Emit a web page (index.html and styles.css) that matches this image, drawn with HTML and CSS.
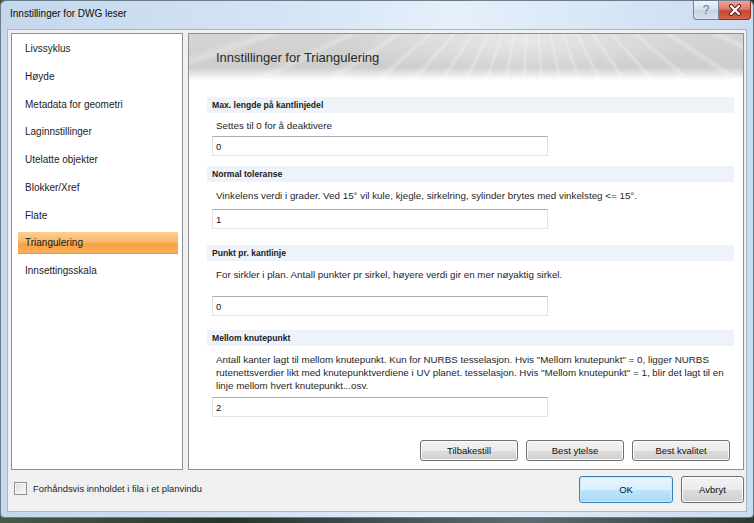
FILE: index.html
```html
<!DOCTYPE html>
<html lang="nb">
<head>
  <meta charset="UTF-8">
  <title>Innstillinger for DWG leser</title>
  <link rel="stylesheet" href="styles.css">
</head>
<body>
  <div class="window">
    <div class="titlebar">
      <span class="title">Innstillinger for DWG leser</span>
      <div class="caption-buttons">
        <span class="cap-btn help">?</span>
        <span class="cap-btn close">
          <svg width="14" height="12" viewBox="0 0 14 12">
            <path d="M3 2 L11 10 M11 2 L3 10" stroke="#5a1a12" stroke-width="4" stroke-linecap="round"/>
            <path d="M3 2 L11 10 M11 2 L3 10" stroke="#fff" stroke-width="2.2" stroke-linecap="round"/>
          </svg>
        </span>
      </div>
    </div>

    <div class="client">
      <div class="panels">
        <ul class="nav">
          <li>Livssyklus</li>
          <li>Høyde</li>
          <li>Metadata for geometri</li>
          <li>Laginnstillinger</li>
          <li>Utelatte objekter</li>
          <li>Blokker/Xref</li>
          <li>Flate</li>
          <li class="active">Triangulering</li>
          <li>Innsettingsskala</li>
        </ul>

        <div class="page">
          <div class="page-head">
            <h2>Innstillinger for Triangulering</h2>
          </div>
          <div class="page-body">
            <section class="group">
              <div class="group-head">Max. lengde på kantlinjedel</div>
              <p class="group-desc">Settes til 0 for å deaktivere</p>
              <input class="field" type="text" value="0">
            </section>

            <section class="group group-2">
              <div class="group-head">Normal toleranse</div>
              <p class="group-desc">Vinkelens verdi i grader. Ved 15° vil kule, kjegle, sirkelring, sylinder brytes med vinkelsteg &lt;= 15°.</p>
              <input class="field" type="text" value="1">
            </section>

            <section class="group group-3">
              <div class="group-head">Punkt pr. kantlinje</div>
              <p class="group-desc">For sirkler i plan. Antall punkter pr sirkel, høyere verdi gir en mer nøyaktig sirkel.</p>
              <input class="field" type="text" value="0">
            </section>

            <section class="group group-4">
              <div class="group-head">Mellom knutepunkt</div>
              <p class="group-desc">Antall kanter lagt til mellom knutepunkt. Kun for NURBS tesselasjon. Hvis "Mellom knutepunkt" = 0, ligger NURBS<br>rutenettsverdier likt med knutepunktverdiene i UV planet. tesselasjon. Hvis "Mellom knutepunkt" = 1, blir det lagt til en<br>linje mellom hvert knutepunkt...osv.</p>
              <input class="field" type="text" value="2">
            </section>

            <div class="page-actions">
              <button class="btn">Tilbakestill</button>
              <button class="btn">Best ytelse</button>
              <button class="btn">Best kvalitet</button>
            </div>
          </div>
        </div>
      </div>

      <div class="footer">
        <label class="preview"><span class="checkbox"></span>Forhåndsvis innholdet i fila i et planvindu</label>
        <div class="dialog-buttons">
          <button class="btn btn-default">OK</button>
          <button class="btn btn-cancel">Avbryt</button>
        </div>
      </div>
    </div>
  </div>
</body>
</html>
```

FILE: styles.css
```css
body {
  margin: 0;
  width: 754px;
  height: 523px;
  overflow: hidden;
  font-family: "Liberation Sans", Arial, sans-serif;
  background: linear-gradient(90deg, #4a5a48, #26342c 30%, #5d6c70 70%, #2c3a33);
}

.window {
  box-sizing: border-box;
  width: 754px;
  height: 518px;
  display: flex;
  flex-direction: column;
  border: 1px solid #6a7c90;
  border-radius: 6px 6px 4px 4px;
  padding: 0 6px 5px 6px;
  background: linear-gradient(90deg, #c4d7ec, #d9e7f6 45%, #e6f0fa 60%, #cadcf0);
}

/* title bar */
.titlebar {
  height: 28px;
  flex-shrink: 0;
  display: flex;
  justify-content: space-between;
  align-items: flex-start;
}

.title {
  font-size: 10px;
  color: #0c0c0c;
  padding: 7px 0 0 3px;
}

.caption-buttons {
  display: flex;
  margin-right: -4px;
}

.cap-btn {
  box-sizing: border-box;
  height: 19px;
  display: flex;
  align-items: center;
  justify-content: center;
}

.help {
  width: 26px;
  border: 1px solid #72839a;
  border-top: none;
  border-radius: 0 0 0 4px;
  background: linear-gradient(#eef3f9, #d3dfec 50%, #c2d2e4 51%, #d6e2ef);
  font-size: 12px;
  color: #66768a;
}

.close {
  width: 32px;
  border: 1px solid #8c2c1e;
  border-top: none;
  border-left: none;
  border-radius: 0 0 4px 0;
  background: linear-gradient(#eaa797, #dc7a68 45%, #c74430 55%, #d7644c);
}

/* client area */
.client {
  flex: 1;
  display: flex;
  flex-direction: column;
  background: #f0f0f0;
  border: 1px solid #a8b6c6;
  padding: 3px 2px 0 3px;
}

.panels {
  height: 437px;
  flex-shrink: 0;
  display: flex;
  gap: 5px;
}

.nav {
  box-sizing: border-box;
  width: 172px;
  margin: 0;
  padding: 4px 4px 0 6px;
  list-style: none;
  background: #fff;
  border: 1px solid #8d9096;
}

.nav li {
  height: 22px;
  line-height: 22px;
  margin-bottom: 5.75px;
  padding-left: 7px;
  font-size: 10px;
  color: #1b1b1b;
}

.nav li.active {
  background: linear-gradient(#fcd08c, #f9b868 45%, #f7a043 55%, #f9b25e);
  box-shadow: inset 0 -1px 0 #e7953f;
}

.page {
  flex: 1;
  display: flex;
  flex-direction: column;
  background: #fff;
  border: 1px solid #8d9096;
  overflow: hidden;
}

.page-head {
  height: 46px;
  flex-shrink: 0;
  padding: 16px 0 0 27px;
  box-sizing: border-box;
  background:
    linear-gradient(to bottom, rgba(255,255,255,0) 72%, #fff 100%),
    radial-gradient(ellipse 180px 36px at 60% 15%, rgba(255,255,255,0.45), rgba(255,255,255,0)),
    repeating-conic-gradient(from 145deg at 62% -90px, rgba(255,255,255,0) 0deg, rgba(255,255,255,0.28) 1deg, rgba(255,255,255,0) 2.4deg, rgba(255,255,255,0) 7.5deg),
    linear-gradient(to bottom, #d5d5d3, #cacac8);
}

.page-head h2 {
  margin: 0;
  font-size: 13px;
  font-weight: normal;
  line-height: 16px;
  color: #2a2a2a;
}

.page-body {
  flex: 1;
  display: flex;
  flex-direction: column;
  padding: 17px 9px 0 18px;
}

.group {
  flex-shrink: 0;
  margin-bottom: 10px;
}

.group-head {
  height: 16px;
  line-height: 16px;
  padding-left: 5px;
  background: #eef2f9;
  font-size: 8.6px;
  font-weight: bold;
  color: #1a1a1a;
}

.group-desc {
  margin: 7px 0 0 9px;
  font-size: 9.8px;
  line-height: 12px;
  color: #1f1f1f;
  white-space: nowrap;
}

.field {
  box-sizing: border-box;
  display: block;
  width: 336px;
  height: 20px;
  margin: 4px 0 0 5px;
  padding: 0 3px;
  border: 1px solid #e2e3ea;
  border-top-color: #abadb3;
  font-family: inherit;
  font-size: 9.5px;
  color: #111;
  background: #fff;
}

.group-2 .group-desc,
.group-3 .group-desc {
  margin-top: 8px;
}

.group-2 .field {
  margin-top: 7px;
}

.group-2 {
  margin-bottom: 16px;
}

.group-3 .field {
  margin-top: 15px;
}

.group-3 {
  margin-bottom: 14px;
}

.group-4 .group-desc {
  line-height: 13px;
}

.group-4 .field {
  margin-top: 5px;
}

.page-actions {
  display: flex;
  justify-content: flex-end;
  gap: 8px;
  margin: 13px 4px 0 0;
}

.btn {
  box-sizing: border-box;
  height: 21px;
  width: 98px;
  border: 1px solid #707070;
  border-radius: 3px;
  background: linear-gradient(#f3f3f3, #ebebeb 50%, #dddddd 51%, #d0d0d0);
  box-shadow: inset 0 0 0 1px #fbfbfb;
  font-family: inherit;
  font-size: 9.5px;
  color: #111;
  padding: 0;
}

/* footer */
.footer {
  flex: 1;
  display: flex;
  justify-content: space-between;
  align-items: flex-start;
  padding-top: 6px;
}

.preview {
  display: flex;
  align-items: center;
  gap: 6px;
  margin: 6px 0 0 3px;
  font-size: 9.4px;
  color: #1f1f1f;
}

.checkbox {
  box-sizing: border-box;
  width: 13px;
  height: 13px;
  border: 1px solid #8f8f8f;
  background: linear-gradient(135deg, #dcdcdc, #fdfdfd);
  box-shadow: inset 0 0 0 1px #f4f4f4;
}

.dialog-buttons {
  display: flex;
  gap: 8px;
}

.btn-default,
.btn-cancel {
  height: 27px;
}

.btn-default {
  width: 94px;
  border-color: #3c7fb1;
  background: linear-gradient(#eaf6fd, #d9f0fc 50%, #bee6fd 51%, #a7d9f5);
  box-shadow: inset 0 0 0 1px #c8eafb;
}

.btn-cancel {
  width: 63px;
}
```
